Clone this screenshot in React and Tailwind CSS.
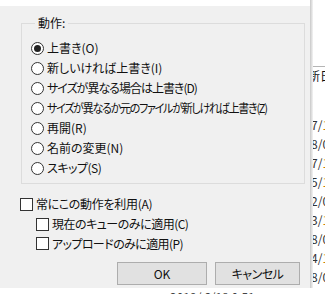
import React from 'react';

const font = { fontFamily: '"Noto Sans CJK JP", "Noto Sans", sans-serif' };

const radios = [
  { label: '上書き(O)', checked: true, cls: '' },
  { label: '新しいければ上書き(I)', cls: '' },
  { label: 'サイズが異なる場合は上書き(D)', cls: 'tracking-[-1px]' },
  { label: 'サイズが異なるか元のファイルが新しければ上書き(Z)', cls: 'inline-block tracking-[-1.4px] scale-x-[0.92] origin-left' },
  { label: '再開(R)', cls: '' },
  { label: '名前の変更(N)', cls: '' },
  { label: 'スキップ(S)', cls: 'tracking-[-0.5px]' },
];

const dates = [
  ['7/', '1'],
  ['8/', '0'],
  ['7/', '1'],
  ['5/', '1'],
  ['2/', '0'],
  ['3/', '1'],
  ['8/', '0'],
  ['4/', '1'],
  ['8/', '0'],
  ['4/', '0'],
];

function Radio({ checked }) {
  return (
    <span className="w-[13px] h-[13px] rounded-full border border-[#333] bg-white flex items-center justify-center shrink-0">
      {checked && <span className="w-[7px] h-[7px] rounded-full bg-[#222]" />}
    </span>
  );
}

function Check() {
  return <span className="w-[13px] h-[13px] border border-[#333] bg-white shrink-0" />;
}

export default function App() {
  return (
    <div
      className="w-[325px] h-[294px] overflow-hidden bg-white grid grid-cols-[310px_1fr] grid-rows-[288px_1fr] text-[12px] text-[#111] [font-feature-settings:'palt']"
      style={font}
    >
      {/* Dialog */}
      <div className="flex flex-col bg-[#f0f0f0]">
        <div className="h-[6px] bg-white" />
        <fieldset className="ml-[21px] mr-[5px] mt-[10px] border border-[#dcdcdc] pl-[9px] pb-[5px] pt-[8px]">
          <legend className="ml-[4px] px-[3px] leading-[14px]">動作:</legend>
          {radios.map((r) => (
            <div key={r.label} className="h-[20px] flex items-center gap-[3px] leading-none whitespace-nowrap">
              <Radio checked={r.checked} />
              <span className={r.cls}>{r.label}</span>
            </div>
          ))}
        </fieldset>
        <div className="mt-[10px] pl-[20px] flex flex-col">
          <div className="h-[20px] flex items-center gap-[3px]">
            <Check />
            <span className="tracking-[-0.3px]">常にこの動作を利用(A)</span>
          </div>
          <div className="h-[20px] pl-[16px] flex items-center gap-[3px]">
            <Check />
            <span className="tracking-[-0.5px]">現在のキューのみに適用(C)</span>
          </div>
          <div className="h-[19px] pl-[16px] flex items-center gap-[3px]">
            <Check />
            <span className="tracking-[-0.6px]">アップロードのみに適用(P)</span>
          </div>
        </div>
        <div className="mt-[9px] pr-[10px] flex justify-end gap-[8px]">
          <button className="w-[90px] h-[23px] bg-[#e1e1e1] border border-[#adadad] text-[12px]">OK</button>
          <button className="w-[85px] h-[23px] bg-[#e1e1e1] border border-[#adadad] text-[12px] tracking-[-0.5px]">キャンセル</button>
        </div>
      </div>

      {/* Background window on the right */}
      <div className="bg-white overflow-hidden flex">
        <div className="w-[3px] h-full bg-gradient-to-r from-[#c8c8c8] to-[#f4f4f4] shrink-0" />
        <div className="flex-1 overflow-hidden">
          <div className="mt-[66px] h-[1px] bg-[#b5b5b5] w-full" />
          <div className="h-[18px] flex items-center whitespace-nowrap -ml-[5px]">新日時</div>
          <div className="mt-[30px] flex flex-col whitespace-nowrap -ml-[2px]">
            {dates.map(([a, b], i) => (
              <div key={i} className="h-[19px] flex items-center leading-none">
                <span className="text-[#333]">{a}</span>
                <span className={b === '1' ? 'text-[#c87f0a]' : 'text-[#333]'}>{b}</span>
              </div>
            ))}
          </div>
        </div>
      </div>

      {/* Background window bottom strip */}
      <div className="bg-white overflow-hidden whitespace-nowrap text-[#444] flex pl-[170px] leading-none pt-[3px]">
        <span>2019/ 6/18 0:51</span>
      </div>
      <div className="bg-white" />
    </div>
  );
}
